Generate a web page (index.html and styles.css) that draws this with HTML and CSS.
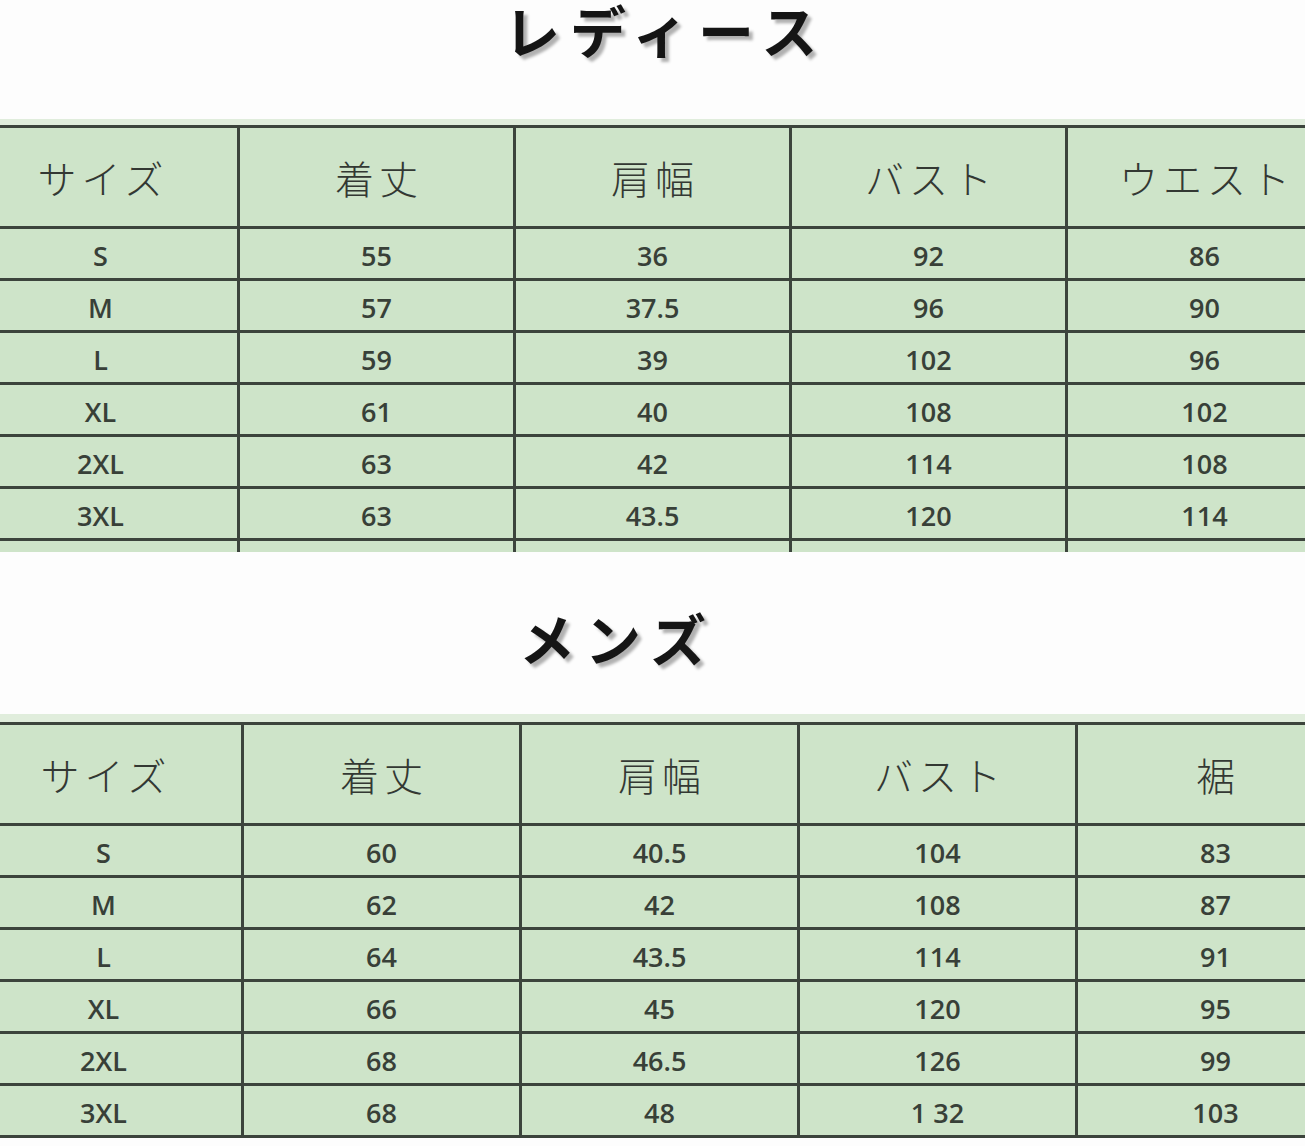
FILE: index.html
```html
<!DOCTYPE html>
<html lang="ja">
<head>
<meta charset="utf-8">
<title>サイズ表</title>
<link rel="stylesheet" href="styles.css">
</head>
<body>
<div class="page">
  <h2 class="title title-ladies">レディース</h2>
  <div class="band band-ladies">
    <div class="sheet sheet-ladies">
      <div class="cell head">サイズ</div><div class="cell head">着丈</div><div class="cell head">肩幅</div><div class="cell head">バスト</div><div class="cell head">ウエスト</div>
      <div class="cell">S</div><div class="cell">55</div><div class="cell">36</div><div class="cell">92</div><div class="cell">86</div>
      <div class="cell">M</div><div class="cell">57</div><div class="cell">37.5</div><div class="cell">96</div><div class="cell">90</div>
      <div class="cell">L</div><div class="cell">59</div><div class="cell">39</div><div class="cell">102</div><div class="cell">96</div>
      <div class="cell">XL</div><div class="cell">61</div><div class="cell">40</div><div class="cell">108</div><div class="cell">102</div>
      <div class="cell">2XL</div><div class="cell">63</div><div class="cell">42</div><div class="cell">114</div><div class="cell">108</div>
      <div class="cell">3XL</div><div class="cell">63</div><div class="cell">43.5</div><div class="cell">120</div><div class="cell">114</div>
      <div class="cell tail"></div><div class="cell tail"></div><div class="cell tail"></div><div class="cell tail"></div><div class="cell tail"></div>
    </div>
  </div>

  <h2 class="title title-mens">メンズ</h2>
  <div class="band band-mens">
    <div class="sheet sheet-mens">
      <div class="cell head">サイズ</div><div class="cell head">着丈</div><div class="cell head">肩幅</div><div class="cell head">バスト</div><div class="cell head">裾</div>
      <div class="cell">S</div><div class="cell">60</div><div class="cell">40.5</div><div class="cell">104</div><div class="cell">83</div>
      <div class="cell">M</div><div class="cell">62</div><div class="cell">42</div><div class="cell">108</div><div class="cell">87</div>
      <div class="cell">L</div><div class="cell">64</div><div class="cell">43.5</div><div class="cell">114</div><div class="cell">91</div>
      <div class="cell">XL</div><div class="cell">66</div><div class="cell">45</div><div class="cell">120</div><div class="cell">95</div>
      <div class="cell">2XL</div><div class="cell">68</div><div class="cell">46.5</div><div class="cell">126</div><div class="cell">99</div>
      <div class="cell">3XL</div><div class="cell">68</div><div class="cell">48</div><div class="cell">1 32</div><div class="cell">103</div>
    </div>
  </div>
</div>
</body>
</html>
```
FILE: styles.css
```css
html, body {
  margin: 0;
  padding: 0;
  background: #fdfdfd;
}

body {
  overflow: hidden;
}

.page {
  width: 1305px;
  height: 1146px;
  overflow: hidden;
}

.title {
  margin: 0;
  font-family: "Noto Sans CJK JP", sans-serif;
  font-weight: 700;
  font-size: 56px;
  line-height: 1.05;
  letter-spacing: 10px;
  color: #151515;
  text-shadow: 4px 4px 3px rgba(0, 0, 0, 0.3);
  box-sizing: border-box;
  white-space: nowrap;
}

.title-ladies {
  height: 119px;
  padding-top: 0;
  padding-left: 504px;
}

.title-mens {
  height: 162px;
  padding-top: 56px;
  padding-left: 519px;
}

.band {
  background: #e0eddc;
  overflow: hidden;
}

.band-ladies {
  padding-top: 6px;
}

.band-mens {
  padding-top: 8px;
}

.sheet {
  display: grid;
  background: #cee4c9;
  border-top: 3px solid #3c443c;
  width: max-content;
}

.sheet-ladies {
  grid-template-columns: repeat(5, 276px);
  margin-left: -36px;
}

.sheet-mens {
  grid-template-columns: repeat(5, 278px);
  margin-left: -34px;
}

.cell {
  box-sizing: border-box;
  height: 52px;
  border-right: 3px solid #3c443c;
  border-bottom: 3px solid #3c443c;
  display: flex;
  align-items: center;
  justify-content: center;
  padding-top: 3px;
  font-family: "Open Sans", "Noto Sans", sans-serif;
  font-weight: 600;
  font-size: 27px;
  color: #384038;
}

.cell.head {
  height: 101px;
  padding-top: 0;
  font-family: "Noto Sans CJK JP", sans-serif;
  font-weight: 300;
  font-size: 39px;
  letter-spacing: 5px;
  padding-left: 5px;
  color: #333833;
}

.cell.tail {
  height: 11px;
  border-bottom: none;
}
```
